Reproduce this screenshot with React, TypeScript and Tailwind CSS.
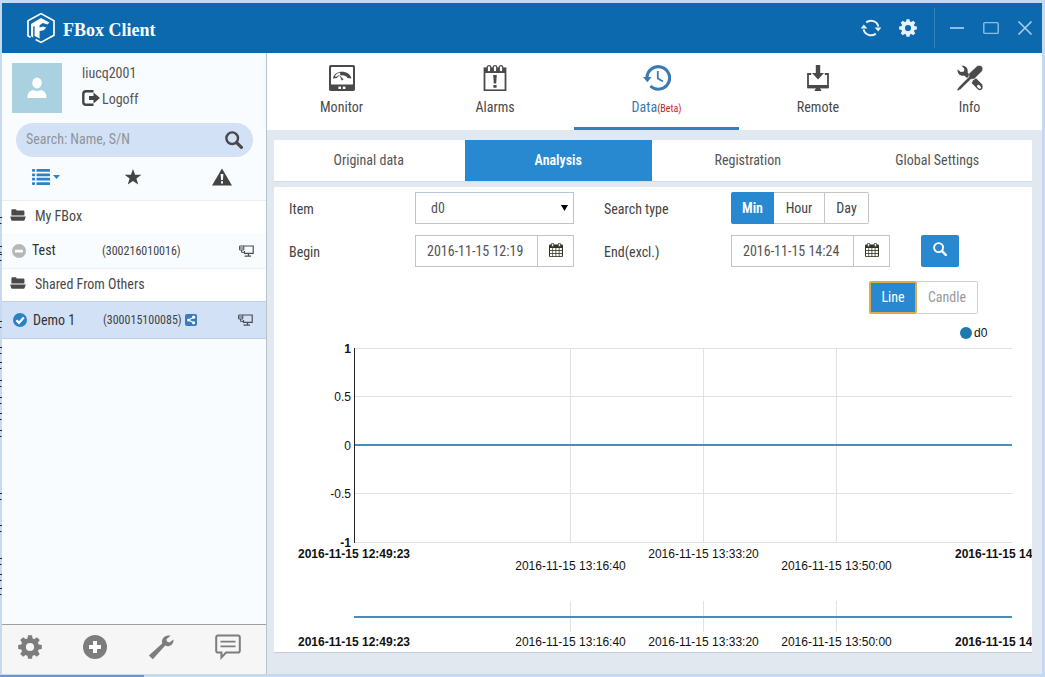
import { useState, type ReactNode } from 'react';

type IconProps = { className?: string };

const eight = [0, 45, 90, 135, 180, 225, 270, 315];

function LogoIcon() {
  return (
    <svg className="h-8 w-[30px]" viewBox="0 0 30 32" fill="none" aria-hidden="true">
      <path d="M4.6 25.4 L2 23.8 V8.8 L15 1.6 L28 8.8 V23.2 L15 30.4 L9.6 27.4" stroke="#fff" strokeWidth="1.7" />
      <path d="M5 24.2 V12 L15 6 L23.4 10.4 L21.4 12.4 L16.8 11 L13.6 13.2 V15.6 L17.2 14.6 L20.4 15.6 L17.6 18.2 L13.6 19 V26.6 L8.6 24 V14 L7.2 14.8 V25.4 Z" fill="#fff" />
    </svg>
  );
}

function GearIcon({ className }: IconProps) {
  return (
    <svg className={className} viewBox="0 0 24 24" fill="none" stroke="currentColor" aria-hidden="true">
      <circle cx="12" cy="12" r="6.6" strokeWidth="5" />
      {eight.map((a) => (
        <path key={a} d="M9.2 4.5 L10 0.2 H14 L14.8 4.5 Z" fill="currentColor" stroke="none" transform={`rotate(${a} 12 12)`} />
      ))}
    </svg>
  );
}

function RefreshIcon() {
  return (
    <svg className="h-5 w-5" viewBox="0 0 20 20" fill="none" stroke="currentColor" strokeWidth="2" aria-hidden="true">
      <path d="M5.2 4.4 A7.6 7.6 0 0 1 17.4 8.6" />
      <path d="M14.8 15.6 A7.6 7.6 0 0 1 2.6 11.4" />
      <path d="M13.6 9.4 H20.4 L17.2 13.4 Z" fill="currentColor" stroke="none" />
      <path d="M6.4 10.6 H-0.4 L2.8 6.6 Z" fill="currentColor" stroke="none" />
    </svg>
  );
}

function LogoffIcon() {
  return (
    <svg className="h-4 w-[18px]" viewBox="0 0 18 16" aria-hidden="true">
      <path d="M11.5 1.3 H4 Q1.3 1.3 1.3 4 V12 Q1.3 14.7 4 14.7 H11.5" fill="none" stroke="currentColor" strokeWidth="2.4" />
      <path d="M7 6 H11.5 V2.6 L18 8 L11.5 13.4 V10 H7 Z" fill="currentColor" />
    </svg>
  );
}

function SearchIcon({ className }: IconProps) {
  return (
    <svg className={className} viewBox="0 0 18 18" fill="none" stroke="currentColor" aria-hidden="true">
      <circle cx="7.2" cy="7.2" r="5.8" strokeWidth="2.4" />
      <path d="M11.6 11.6 L16.4 16.4" strokeWidth="3.2" strokeLinecap="round" />
    </svg>
  );
}

function ListIcon() {
  return (
    <svg className="h-4 w-[18px]" viewBox="0 0 18 16" fill="currentColor" aria-hidden="true">
      {[0, 4.4, 8.8, 13.2].map((y) => (
        <g key={y}>
          <rect x="0" y={y} width="3" height="2.8" rx="0.8" />
          <rect x="4.5" y={y} width="13.5" height="2.8" rx="0.6" />
        </g>
      ))}
    </svg>
  );
}

function StarIcon() {
  return (
    <svg className="h-4 w-[18px]" viewBox="0 0 18 16" fill="currentColor" aria-hidden="true">
      <path d="M9 0 L11.1 5.7 H17.4 L12.4 9.5 L14.2 15.6 L9 12 L3.8 15.6 L5.6 9.5 L0.6 5.7 H6.9 Z" />
    </svg>
  );
}

function WarningIcon() {
  return (
    <svg className="h-[18px] w-5" viewBox="0 0 20 18" aria-hidden="true">
      <path d="M10 0.6 L20 17.6 H0 Z" fill="currentColor" />
      <path d="M8.6 6 H11.4 L10.9 12 H9.1 Z M9 13.2 H11 V15.4 H9 Z" fill="#fff" />
    </svg>
  );
}

function FolderIcon() {
  return (
    <svg className="h-3 w-4" viewBox="0 0 16 12" fill="currentColor" aria-hidden="true">
      <path d="M1.4 6.6 V1.4 Q1.4 0.2 2.4 0.2 H5.6 Q6.4 0.2 6.6 1.4 H13.4 Q14.4 1.4 14.4 2.6 V6.6 Z" />
      <path d="M0.2 7.6 H15.8 L14.6 11 Q14.4 11.8 13.6 11.8 H2.2 Q1.4 11.8 1.2 11 Z" />
    </svg>
  );
}

function OfflineIcon() {
  return (
    <svg className="h-[14px] w-[14px]" viewBox="0 0 14 14" aria-hidden="true">
      <circle cx="7" cy="7" r="7" fill="#b7b7b7" />
      <rect x="3" y="5.8" width="8" height="2.6" rx="0.4" fill="#fff" />
    </svg>
  );
}

function OnlineIcon() {
  return (
    <svg className="h-[14px] w-[14px]" viewBox="0 0 14 14" fill="none" aria-hidden="true">
      <circle cx="7" cy="7" r="7" fill="#2b83c6" />
      <path d="M3.4 7.2 L6 9.8 L10.8 4.6" stroke="#fff" strokeWidth="2.2" />
    </svg>
  );
}

function ShareIcon() {
  return (
    <svg className="h-3 w-3" viewBox="0 0 12 12" aria-hidden="true">
      <rect width="12" height="12" rx="2" fill="#3a7cb8" />
      <path d="M8.6 3.2 L3.6 6 L8.6 8.8" fill="none" stroke="#fff" strokeWidth="1.1" />
      <circle cx="8.6" cy="3.2" r="1.6" fill="#fff" />
      <circle cx="3.6" cy="6" r="1.6" fill="#fff" />
      <circle cx="8.6" cy="8.8" r="1.6" fill="#fff" />
    </svg>
  );
}

function TerminalIcon() {
  return (
    <svg className="h-3 w-[15px]" viewBox="0 0 15 12" fill="none" stroke="#4a4f57" aria-hidden="true">
      <path d="M4.5 1 H14.2 V8.4 H5.5 V6 M9.5 8.4 V11 M5.5 11.2 H12" strokeWidth="1.2" />
      <path d="M0.6 1 H4.8 V5 H0.6 Z M0.6 3 H4.8 M2.6 5 V7.4 H5.5" strokeWidth="1" />
    </svg>
  );
}

function AvatarIcon() {
  return (
    <svg className="h-[22px] w-5" viewBox="0 0 20 22" fill="#fff" aria-hidden="true">
      <ellipse cx="10" cy="6" rx="4.8" ry="5.4" />
      <path d="M0.5 21 C0.5 16 2 14.4 6 13 Q10 15 14 13 C18 14.4 19.5 16 19.5 21 Z" />
    </svg>
  );
}

function PlusCircleIcon() {
  return (
    <svg className="h-6 w-6" viewBox="0 0 24 24" aria-hidden="true">
      <circle cx="12" cy="12" r="12" fill="currentColor" />
      <path d="M10 6 H14 V10 H18 V14 H14 V18 H10 V14 H6 V10 H10 Z" fill="#fff" />
    </svg>
  );
}

function WrenchIcon() {
  return (
    <svg className="h-[26px] w-[26px]" viewBox="0 0 26 26" fill="currentColor" aria-hidden="true">
      <path d="M22.6 1.8 L18.4 5.2 L19 7.6 L21.4 8.4 L25.4 5.6 C26 9 23.4 12.2 20 12.2 C18.8 12.2 18 12 17.2 11.6 L4.8 25.2 L0.8 21.6 L14.2 9.4 C12.8 4.6 17.4 0 22.6 1.8 Z" />
    </svg>
  );
}

function MessageIcon() {
  return (
    <svg className="h-[26px] w-[26px]" viewBox="0 0 26 26" fill="none" stroke="currentColor" aria-hidden="true">
      <path d="M3 1.6 H23 Q24.8 1.6 24.8 3.4 V16.8 Q24.8 18.6 23 18.6 H11 L6.4 23.4 V18.6 H3 Q1.2 18.6 1.2 16.8 V3.4 Q1.2 1.6 3 1.6 Z" strokeWidth="2" />
      <path d="M5.5 7.6 H20.5 M5.5 12.4 H20.5" strokeWidth="1.8" />
    </svg>
  );
}

function MonitorIcon() {
  return (
    <svg className="h-7 w-[26px]" viewBox="0 0 26 28" aria-hidden="true">
      <rect x="0" y="1" width="26" height="26" rx="1.8" fill="currentColor" />
      <rect x="2" y="3" width="22" height="17.4" rx="0.6" fill="#fff" />
      <path d="M4 14.6 C4.8 5.4 21.2 5.4 22.4 14.6 L18.4 14 C17 10.4 9.6 10.4 8 14 Z" fill="currentColor" />
      <path d="M5.8 12.4 C7 9.8 9 9 11 8.8 L11.4 10.4 Q8.8 11 7.6 12.8 Z" fill="#fff" />
      <path d="M12.4 17 L9.6 9.6 L15 15.6 Z" fill="currentColor" stroke="#fff" strokeWidth="0.8" />
      <rect x="9.4" y="22.6" width="2.6" height="2.4" fill="#fff" />
      <rect x="13.8" y="22.6" width="2.6" height="2.4" fill="#fff" />
    </svg>
  );
}

function AlarmIcon() {
  return (
    <svg className="h-7 w-6" viewBox="0 0 24 28" aria-hidden="true">
      <path d="M0.6 3.4 H23.4 V27 H0.6 Z" fill="currentColor" />
      <rect x="2.4" y="9" width="19.2" height="16.4" fill="#fff" />
      {[6, 12, 18].map((x) => (
        <rect key={x} x={x - 1.8} y="1.6" width="3.6" height="6.4" rx="1.8" fill="#fff" stroke="currentColor" strokeWidth="1.3" />
      ))}
      <path d="M10.2 11 H13.8 L13.2 19.6 H10.8 Z M10.4 21 H13.6 V23.8 H10.4 Z" fill="currentColor" />
    </svg>
  );
}

function HistoryIcon() {
  return (
    <svg className="h-7 w-7" viewBox="0 0 28 28" fill="none" stroke="currentColor" aria-hidden="true">
      <path d="M4 14.4 A11.3 11.3 0 1 1 7.4 22" strokeWidth="3.1" />
      <path d="M0 13 H8.6 L4.4 18.2 Z" fill="currentColor" stroke="none" />
      <path d="M14.8 7 V14.4 L20 17.6" strokeWidth="1.8" />
    </svg>
  );
}

function RemoteIcon() {
  return (
    <svg className="h-7 w-[22px]" viewBox="0 0 22 28" fill="none" stroke="currentColor" aria-hidden="true">
      <path d="M4.2 10 H1 V23.4 H21 V10 H17.8" strokeWidth="1.8" />
      <path d="M1 22.6 H21" strokeWidth="3.2" />
      <path d="M8.8 1 H13.2 V9 H17 L11 15.6 L5 9 H8.8 Z" fill="currentColor" stroke="none" />
      <path d="M9 24 H13 L14.6 27 H7.4 Z" fill="currentColor" stroke="none" />
    </svg>
  );
}

function ToolsIcon() {
  return (
    <svg className="h-7 w-[26px]" viewBox="0 0 26 28" aria-hidden="true">
      <path d="M4.6 1.8 C8.8 1.2 11.4 4.6 10.6 8.4 L13 11 L10 14 L7.2 11.6 C3.4 12.6 -0.2 9.4 0.6 5.4 L3.8 8 L7 7.6 L7.4 4.8 Z" fill="currentColor" />
      <path d="M16 16.6 L19 14.2 L25 20.2 Q26 22 25.4 24.4 L24 26 Q22.6 26.6 21 25.4 L14.6 19 Z" fill="currentColor" />
      <ellipse cx="22" cy="22.8" rx="1.5" ry="2.3" fill="#fff" transform="rotate(-45 22 22.8)" />
      <path d="M20.4 1.8 Q23.6 0.6 25.2 2.8 Q26.2 4.4 25.2 7 L17.2 15 L13.8 15.2 L3.4 25.4 L0.4 27 L0.2 25.4 L1.8 23 L12 12.8 L12 9.6 Z" fill="currentColor" stroke="#fff" strokeWidth="0.4" />
    </svg>
  );
}

function CalendarIcon() {
  return (
    <svg className="h-[14px] w-[14px]" viewBox="0 0 14 14" aria-hidden="true">
      <rect x="0" y="1.6" width="14" height="12.4" rx="1" fill="#333326" />
      <g fill="#fff">
        {[5, 8, 11].map((y) =>
          [1, 4.1, 7.3, 10.5].map((x) => <rect key={`${x}-${y}`} x={x} y={y} width="2.4" height="2.2" />),
        )}
      </g>
      {[3.6, 10.4].map((x) => (
        <rect key={x} x={x - 1.2} y="0.3" width="2.4" height="3.4" rx="1" fill="#e8e8e0" stroke="#333326" strokeWidth="0.9" />
      ))}
    </svg>
  );
}

function DesktopEdge() {
  const marks = [221, 250, 258, 325, 351, 366, 384, 401, 417, 434, 497, 529, 562, 578, 592];
  return (
    <svg className="absolute left-0 top-0 h-[600px] w-[2px]" viewBox="0 0 2 600" stroke="#1c2430" aria-hidden="true">
      {marks.map((y) => (
        <path key={y} d={`M0 ${y - 3.5} H2 M0 ${y + 2.5} H1.5`} />
      ))}
    </svg>
  );
}

function NavTab({ icon, label, active }: { icon: ReactNode; label: ReactNode; active?: boolean }) {
  return (
    <button
      type="button"
      className={`flex flex-col items-center gap-[5px] border-b-[3px] pt-[11px] ${
        active ? 'border-[#2f83bd] text-[#3a7ab3]' : 'border-transparent text-[#4a4a4a]'
      }`}
    >
      {icon}
      <span className="leading-5">{label}</span>
    </button>
  );
}

function GroupRow({ name }: { name: string }) {
  return (
    <div className="flex h-8 items-center gap-2 bg-white px-2 pb-px text-[#4a4a4a]">
      <span className="pb-1"><FolderIcon /></span>
      <span className="pl-px">{name}</span>
    </div>
  );
}

function DateField({ id, value }: { id: string; value: string }) {
  return (
    <div className="flex h-8 w-[159px] border border-[#c0c4cb]">
      <input id={id} type="text" defaultValue={value} className="w-[122px] border-r border-[#c0c4cb] bg-white pl-[11px] text-[#555] outline-none" />
      <button type="button" aria-label="Pick a date" className="flex flex-1 items-center justify-center pb-0.5">
        <CalendarIcon />
      </button>
    </div>
  );
}

const gridX = [296.5, 429.5, 562.5];
const gridTimes = ['2016-11-15 13:16:40', '2016-11-15 13:33:20', '2016-11-15 13:50:00'];
const yTicks = [
  { label: '1', y: 23.5 },
  { label: '0.5', y: 71.5 },
  { label: '0', y: 120.5 },
  { label: '-0.5', y: 168.5 },
  { label: '-1', y: 217.5 },
];

function Chart() {
  return (
    <svg
      className="block h-[327px] w-full overflow-hidden font-['Liberation_Sans',sans-serif] text-[12px]"
      fill="#111"
      role="img"
      aria-label="d0"
    >
      <circle cx="692" cy="8" r="6" fill="#1f77b4" />
      <text x="700" y="12">d0</text>
      {yTicks.map((t) => (
        <g key={t.label}>
          <path d={`M80 ${t.y} H738`} stroke="#dfe1e3" />
          <text x="77" y={t.y + 4} textAnchor="end" fontWeight={Math.abs(Number(t.label)) === 1 ? 700 : 400}>
            {t.label}
          </text>
        </g>
      ))}
      {gridX.map((x, i) => (
        <g key={x} textAnchor="middle">
          <path d={`M${x} 23 V218 M${x} 276 V307`} stroke="#dfe1e3" />
          <text x={x} y={i === 1 ? 233 : 245}>{gridTimes[i]}</text>
          <text x={x} y="321">{gridTimes[i]}</text>
        </g>
      ))}
      <path d="M80.5 23 V218" stroke="#222" />
      <path d="M81 120 H738 M80 292 H738" stroke="#4a8dbd" strokeWidth="2" />
      {[233, 321].map((y) => (
        <g key={y} fontWeight="700" textAnchor="middle">
          <text x="80" y={y}>2016-11-15 12:49:23</text>
          <text x="737" y={y}>2016-11-15 14:12:00</text>
        </g>
      ))}
    </svg>
  );
}

export default function App() {
  const [query, setQuery] = useState('');
  return (
    <div className="relative flex min-h-screen flex-col bg-[#c5daf0] pb-[3px] pl-[2px] pr-[3px] pt-[3px] font-['Roboto_Condensed',Roboto,sans-serif] text-[14px] text-[#444]">
      <DesktopEdge />
      <div className="absolute bottom-0 left-0 h-[2px] w-36 bg-[#6b97cf]" />
      <header className="flex h-[50px] items-center bg-[#0d69ae] pl-6 pr-[9px] text-white">
        <LogoIcon />
        <h1 className="pl-[7px] pt-1 font-['Liberation_Serif',serif] text-[18px] font-bold">FBox Client</h1>
        <div className="ml-auto flex h-10 items-center text-[#e6f2fb]">
          <button type="button" aria-label="Refresh" className="mr-[18px]"><RefreshIcon /></button>
          <button type="button" aria-label="Settings" className="mr-[17px]"><GearIcon className="h-[18px] w-[18px]" /></button>
          <div className="flex h-full items-center gap-[18px] border-l border-[#3482bc] pl-[14px]">
            <button type="button" aria-label="Minimize">
              <svg className="h-4 w-4" viewBox="0 0 16 16" stroke="#8cbfe6" strokeWidth="2"><path d="M1 8 H15" /></svg>
            </button>
            <button type="button" aria-label="Maximize">
              <svg className="h-4 w-4" viewBox="0 0 16 16" fill="none" stroke="#8cbfe6" strokeWidth="1.4"><rect x="0.8" y="2.6" width="14.4" height="10.8" rx="1" /></svg>
            </button>
            <button type="button" aria-label="Close">
              <svg className="h-4 w-4" viewBox="0 0 16 16" stroke="#a6cfee" strokeWidth="1.6"><path d="M1.5 1.5 L14.5 14.5 M14.5 1.5 L1.5 14.5" /></svg>
            </button>
          </div>
        </div>
      </header>

      <div className="flex flex-1">
        <aside className="flex w-[265px] shrink-0 flex-col border-r border-[#b5c3cf] bg-[#f8fcff]">
          <div className="flex gap-5 pl-2.5 pt-2.5">
            <div className="flex h-[50px] w-[50px] items-center justify-center bg-[#a9d1e0]"><AvatarIcon /></div>
            <div className="flex flex-col gap-1.5 text-[#555]">
              <span className="leading-5">liucq2001</span>
              <button type="button" className="flex items-center gap-0.5 leading-5">
                <span className="pb-0.5 text-[#444]"><LogoffIcon /></span>
                <span>Logoff</span>
              </button>
            </div>
          </div>
          <div className="ml-[14px] mr-[13px] mt-2.5 flex h-[34px] items-center rounded-full bg-[#d3e1f6] px-2.5">
            <input
              type="text"
              aria-label="Search: Name, S/N"
              placeholder="Search: Name, S/N"
              value={query}
              onChange={(e) => setQuery(e.target.value)}
              className="min-w-0 flex-1 bg-transparent pb-0.5 outline-none placeholder:text-[#8d949c]"
            />
            <button type="button" aria-label="Search" className="text-[#484848]"><SearchIcon className="h-[18px] w-[18px]" /></button>
          </div>
          <div className="flex h-11 items-center border-b border-[#e8edf2] pb-1 pl-[30px] pr-[34px] text-[#444]">
            <button type="button" aria-label="List view" className="flex items-center gap-[3px] text-[#2b83c6]">
              <ListIcon />
              <svg className="h-1 w-[7px]" viewBox="0 0 7 4" fill="currentColor"><path d="M0 0 H7 L3.5 4 Z" /></svg>
            </button>
            <button type="button" aria-label="Favorites" className="ml-16"><StarIcon /></button>
            <button type="button" aria-label="Warnings" className="ml-auto"><WarningIcon /></button>
          </div>

          <GroupRow name="My FBox" />
          <a href="#test" className="flex h-9 items-center border-b border-[#eef2f6] pl-2.5 pr-3 text-[#333]">
            <OfflineIcon />
            <span className="w-[76px] pl-1.5">Test</span>
            <span className="flex-1 text-[12px] text-[#444]">(300216010016)</span>
            <TerminalIcon />
          </a>
          <GroupRow name="Shared From Others" />
          <a href="#demo" className="flex h-[38px] items-center border-y border-[#bccfe6] bg-[#d3e1f6] pl-[11px] pr-[13px] text-[#333]">
            <OnlineIcon />
            <span className="w-[76px] pl-1.5">Demo 1</span>
            <span className="flex flex-1 items-center gap-[3px] text-[12px] text-[#444]">
              (300015100085) <ShareIcon />
            </span>
            <TerminalIcon />
          </a>

          <div className="mt-auto flex h-[50px] items-center justify-between border-t border-[#9a9fa4] bg-[#f6f6f6] pb-1.5 pl-4 pr-[25px] text-[#7d7d7d]">
            <button type="button" aria-label="Preferences"><GearIcon className="h-6 w-6" /></button>
            <button type="button" aria-label="Add"><PlusCircleIcon /></button>
            <button type="button" aria-label="Tools"><WrenchIcon /></button>
            <button type="button" aria-label="Messages"><MessageIcon /></button>
          </div>
        </aside>

        <main className="flex min-w-0 flex-1 flex-col bg-[#e1e8ef]">
          <nav className="grid h-[77px] grid-cols-[149fr_158fr_165fr_158fr_145fr] bg-white">
            <NavTab icon={<MonitorIcon />} label="Monitor" />
            <NavTab icon={<AlarmIcon />} label="Alarms" />
            <NavTab icon={<HistoryIcon />} label={<>Data<span className="text-[10px] text-[#c8202c]">(Beta)</span></>} active />
            <NavTab icon={<RemoteIcon />} label="Remote" />
            <NavTab icon={<ToolsIcon />} label="Info" />
          </nav>

          <div className="flex flex-col gap-[5px] pl-[7px] pr-2.5 pt-2.5">
            <div className="grid h-[42px] grid-cols-4 border-b border-[#d3dde5] bg-white text-[#555]">
              <button type="button">Original data</button>
              <button type="button" className="mx-px bg-[#2889d1] font-semibold text-white">Analysis</button>
              <button type="button">Registration</button>
              <button type="button">Global Settings</button>
            </div>

            <section className="border-b border-[#c2cdd6] bg-white">
              <div className="grid grid-cols-[126fr_189fr_127fr_190fr_111fr] gap-y-[11px] pl-[15px] pt-[5px]">
                <label htmlFor="item" className="flex h-8 items-center pt-0.5">Item</label>
                <div className="relative w-[159px]">
                  <select id="item" className="h-8 w-full appearance-none border border-[#b9c3d4] bg-white pl-[15px] text-[#555]">
                    <option>d0</option>
                  </select>
                  <svg className="pointer-events-none absolute right-1.5 top-[13px] h-[6px] w-[7px]" viewBox="0 0 7 6"><path d="M0 0 H7 L3.5 6 Z" /></svg>
                </div>
                <span className="flex h-8 items-center pt-0.5">Search type</span>
                <div className="flex h-8">
                  <button type="button" className="w-[43px] rounded-l-xs bg-[#2889d1] font-semibold text-white">Min</button>
                  <button type="button" className="w-[51px] border border-l-0 border-[#c4c4c4]">Hour</button>
                  <button type="button" className="w-11 rounded-r-xs border border-l-0 border-[#c4c4c4]">Day</button>
                </div>
                <span />
                <label htmlFor="begin" className="flex h-8 items-center pt-0.5">Begin</label>
                <DateField id="begin" value="2016-11-15 12:19" />
                <label htmlFor="end" className="flex h-8 items-center pt-0.5">End(excl.)</label>
                <DateField id="end" value="2016-11-15 14:24" />
                <button type="button" aria-label="Run search" className="flex h-8 w-[38px] items-center justify-center rounded-xs bg-[#2889d1] pb-1 text-white">
                  <SearchIcon className="h-[14px] w-[14px]" />
                </button>
              </div>
              <div className="flex justify-end pb-[11px] pr-[54px] pt-3.5">
                <button type="button" className="h-[33px] w-12 rounded-xs border-2 border-[#d9ac4c] bg-[#2889d1] text-white">Line</button>
                <button type="button" className="h-[33px] w-[61px] rounded-r-xs border border-l-0 border-[#d0d0d0] text-[#999]">Candle</button>
              </div>
              <Chart />
            </section>
          </div>
        </main>
      </div>
    </div>
  );
}
